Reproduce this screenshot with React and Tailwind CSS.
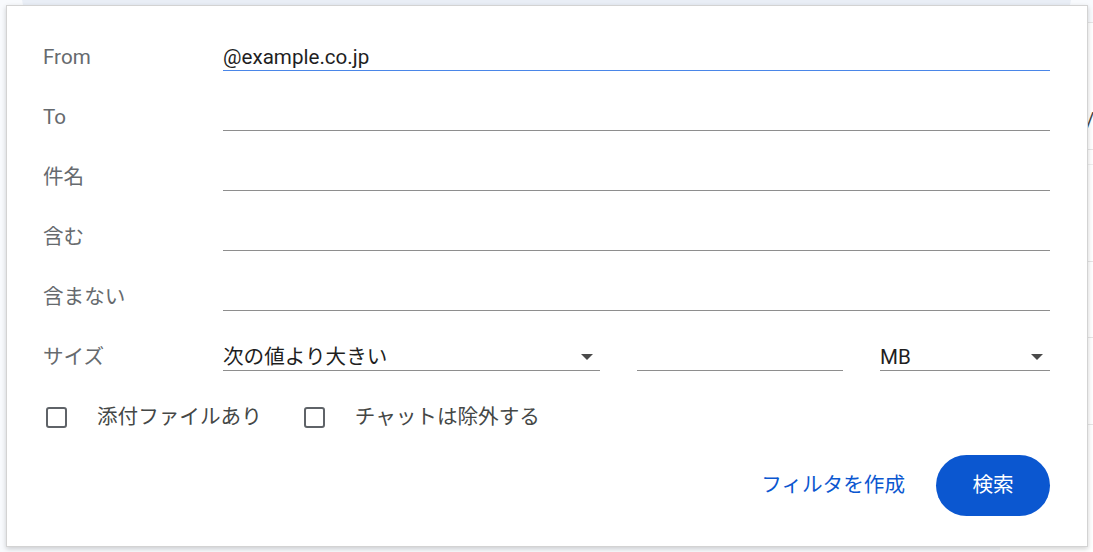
import React from 'react';

const fields = [
    { label: 'From', value: '@example.co.jp', active: true },
    { label: 'To', value: '' },
    { label: '件名', value: '' },
    { label: '含む', value: '' },
    { label: '含まない', value: '' },
];

const Arrow = () => (
    <svg width="12" height="6" viewBox="0 0 12 6" className="shrink-0">
        <path d="M0 0h12L6 6z" fill="#4a4a4a" />
    </svg>
);

const Checkbox = ({ label, className = '' }) => (
    <label className={`flex items-center ${className}`}>
        <span className="w-[21px] h-[21px] border-2 border-[#5f6368] rounded-[3px] ml-[3px] shrink-0" />
        <span className="ml-[30px] text-[#444746]">{label}</span>
    </label>
);

const App = () => {
    return (
        <div
            className="relative w-[1093px] h-[552px] overflow-hidden bg-[#f8fafd] flex flex-col text-[20.6px]"
            style={{ fontFamily: "Roboto, 'Noto Sans CJK JP', sans-serif" }}
        >
            {/* background: search bar + mail list */}
            <div className="h-[22px] shrink-0 px-[22px]">
                <div className="-mt-[26px] h-[48px] rounded-full bg-[#e9eef6]" />
            </div>
            <div className="flex flex-1">
                <div className="flex-1" />
                <div className="w-[93px] bg-white flex flex-col text-[#444746]">
                    <div className="h-[128px] border-t border-b border-[#e5e5e5] pt-[82px] pl-[86px]">/</div>
                    <div className="h-[15px] border-b border-[#eeeeee]" />
                    <div className="h-[97px] border-b border-[#e5e5e5]" />
                    <div className="h-[76px] border-b border-[#e5e5e5]" />
                    <div className="h-[87px] border-b border-[#e5e5e5]" />
                    <div className="flex-1" />
                </div>
            </div>

            {/* search options panel */}
            <div className="absolute left-[6px] top-[5px] w-[1082px] h-[542px] bg-white border border-[#d3d3d3] shadow-[0_2px_5px_rgba(0,0,0,0.18)] pl-[36px] pr-[37px] pt-[38px] flex flex-col">
                <div className="flex flex-col gap-[33px]">
                    {fields.map((f) => (
                        <div key={f.label} className="flex items-center h-[27px]">
                            <div className="w-[180px] text-[#666a6e] shrink-0">{f.label}</div>
                            <div
                                className={`flex-1 h-[27px] leading-[26px] text-[#1f1f1f] border-b ${
                                    f.active ? 'border-[#4a86e8]' : 'border-[#8e8e8e]'
                                }`}
                            >
                                {f.value}
                            </div>
                        </div>
                    ))}

                    <div className="flex items-center h-[27px]">
                        <div className="w-[180px] text-[#666a6e] shrink-0">サイズ</div>
                        <div className="w-[377px] h-[27px] leading-[26px] text-[#1f1f1f] border-b border-[#8e8e8e] flex items-center justify-between pr-[7px]">
                            <span>次の値より大きい</span>
                            <Arrow />
                        </div>
                        <div className="w-[206px] ml-[37px] h-[27px] border-b border-[#8e8e8e]" />
                        <div className="w-[170px] ml-[37px] h-[27px] leading-[26px] text-[#1f1f1f] border-b border-[#8e8e8e] flex items-center justify-between pr-[7px]">
                            <span>MB</span>
                            <Arrow />
                        </div>
                    </div>

                    <div className="flex items-center h-[27px]">
                        <Checkbox label="添付ファイルあり" />
                        <Checkbox label="チャットは除外する" className="ml-[39px]" />
                    </div>
                </div>

                <div className="flex justify-end items-center gap-[31px] mt-[24px]">
                    <button className="text-[#0b57d0]">フィルタを作成</button>
                    <button className="w-[114px] h-[61px] rounded-full bg-[#0b57d0] text-white">検索</button>
                </div>
            </div>
        </div>
    );
};

export default App;
